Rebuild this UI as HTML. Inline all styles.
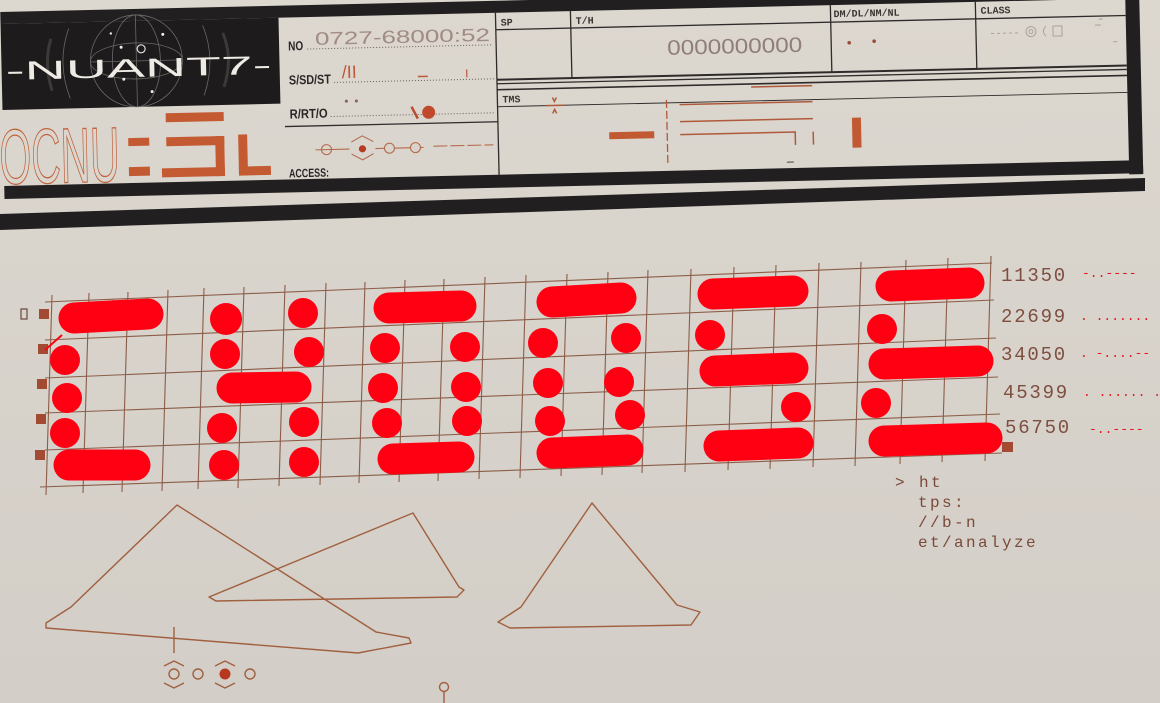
<!DOCTYPE html>
<html><head><meta charset="utf-8"><style>
html,body{margin:0;padding:0;background:#d6d1c9;}
svg{display:block}
.n{font-family:"Liberation Sans",sans-serif;font-weight:bold;fill:#2a2626}
.m{font-family:"Liberation Mono",monospace}
</style></head><body>
<svg width="1160" height="703" viewBox="0 0 1160 703" xmlns="http://www.w3.org/2000/svg">
<defs>
<linearGradient id="pg" x1="0" y1="0" x2="0" y2="1">
<stop offset="0" stop-color="#dcd7cf"/><stop offset="1" stop-color="#d3cec7"/>
</linearGradient>
</defs>
<rect width="1160" height="703" fill="url(#pg)"/>

<polygon points="0,214 1145,178 1145,191 0,230" fill="#211f1f"/>

<g transform="rotate(-1.3)">
  <rect x="0" y="12" width="1140" height="12" fill="#211f1f"/>
  <rect x="1125" y="-10" width="14" height="210" fill="#211f1f"/>
  <rect x="0" y="186" width="1139" height="13" fill="#211f1f"/>
  <rect x="0" y="24" width="278" height="86" fill="#1d1b1b"/>
  <g stroke="#8d8a88" fill="none" stroke-width="0.8" opacity="0.7">
    <circle cx="135" cy="64" r="46"/>
    <ellipse cx="135" cy="64" rx="24" ry="46"/>
    <ellipse cx="135" cy="64" rx="46" ry="18"/>
    <line x1="89" y1="64" x2="181" y2="64"/>
    <line x1="135" y1="18" x2="135" y2="110"/>
    <path d="M68 30 Q55 64 68 100"/><path d="M202 30 Q215 64 202 100"/>
    <path d="M50 40 Q42 64 50 92" stroke-width="3" stroke="#4a4747"/>
    <path d="M222 38 Q232 64 222 92" stroke-width="3" stroke="#4a4747"/>
  </g>
  <circle cx="140" cy="52" r="4" fill="none" stroke="#ddd" stroke-width="1.2"/>
  <g fill="#eee"><circle cx="120" cy="50" r="1.5"/><circle cx="162" cy="38" r="1.5"/><circle cx="122" cy="82" r="1.5"/><circle cx="150" cy="95" r="1.5"/><circle cx="110" cy="36" r="1.2"/></g>
  <text x="4" y="80" font-family="Liberation Sans,sans-serif" font-size="26" fill="#eeeae4" textLength="266" lengthAdjust="spacingAndGlyphs">-NUANT7-</text>

  <text x="-4" y="184" font-family="Liberation Sans,sans-serif" font-size="78" fill="none" stroke="#c0623c" stroke-width="1.3" textLength="120" lengthAdjust="spacingAndGlyphs">OCNU</text>
  <g fill="#c45a32">
    <rect x="125" y="141" width="21" height="8"/><rect x="125" y="170" width="21" height="9"/>
    <rect x="163" y="117" width="58" height="9"/><rect x="163" y="141" width="58" height="9"/>
    <rect x="212" y="141" width="9" height="40"/><rect x="158" y="172" width="63" height="9"/>
    <rect x="235" y="140" width="9" height="41"/><rect x="235" y="172" width="32" height="9"/>
  </g>

  <g stroke="#2e2b2a" stroke-width="1.3">
    <line x1="495" y1="24" x2="495" y2="186"/>
    <line x1="282" y1="133" x2="495" y2="133"/>
    <line x1="495" y1="41" x2="1125" y2="41"/>
    <line x1="570" y1="24" x2="570" y2="92"/>
    <line x1="830" y1="24" x2="830" y2="92"/>
    <line x1="975" y1="24" x2="975" y2="92"/>
    <line x1="495" y1="91" x2="1125" y2="91" stroke-width="2"/>
    <line x1="495" y1="95" x2="1125" y2="95"/>
    <line x1="495" y1="101" x2="1125" y2="101" stroke-width="1.6"/>
    <line x1="495" y1="118" x2="1125" y2="118" stroke-width="0.9"/>
  </g>
  <text class="n" x="287" y="57" font-size="13" textLength="15" lengthAdjust="spacingAndGlyphs">NO</text>
  <line x1="306" y1="56" x2="492" y2="56" stroke="#6a5e58" stroke-width="1" stroke-dasharray="1 2"/>
  <text x="314" y="52" font-family="Liberation Sans,sans-serif" font-size="18" fill="#a08c84" textLength="175" lengthAdjust="spacingAndGlyphs">0727-68000:52</text>
  <text class="n" x="287" y="91" font-size="13" textLength="42" lengthAdjust="spacingAndGlyphs">S/SD/ST</text>
  <line x1="332" y1="90" x2="492" y2="90" stroke="#6a5e58" stroke-width="1" stroke-dasharray="1 2"/>
  <text x="340" y="86" font-family="Liberation Sans,sans-serif" font-size="18" fill="#c0583a">/II</text>
  <line x1="416" y1="86" x2="426" y2="86" stroke="#c0583a" stroke-width="1.5"/>
  <line x1="465" y1="80" x2="465" y2="88" stroke="#c0583a" stroke-width="1.2"/>
  <text class="n" x="287" y="125" font-size="13" textLength="38" lengthAdjust="spacingAndGlyphs">R/RT/O</text>
  <line x1="328" y1="124" x2="492" y2="124" stroke="#6a5e58" stroke-width="1" stroke-dasharray="1 2"/>
  <circle cx="344" cy="109" r="1.5" fill="#8a6050"/><circle cx="354" cy="109" r="1.5" fill="#8a6050"/>
  <line x1="409" y1="116" x2="415" y2="128" stroke="#b84c2c" stroke-width="2.5"/>
  <circle cx="426" cy="122" r="6.5" fill="#c0492c"/>
  <g stroke="#b56a4c" fill="none" stroke-width="1.1">
    <line x1="312" y1="157" x2="346" y2="157"/>
    <circle cx="323" cy="157" r="5"/>
    <path d="M348 150 L359 144 L370 150 M348 162 L359 168 L370 162"/>
    <line x1="372" y1="157" x2="420" y2="157"/>
    <circle cx="386" cy="157" r="5" fill="#d8d3cb"/>
    <circle cx="412" cy="157" r="5" fill="#d8d3cb"/>
    <line x1="430" y1="156" x2="490" y2="156" stroke-dasharray="14 3"/>
  </g>
  <circle cx="359" cy="157" r="3.6" fill="#b93a22"/>
  <text class="n" x="285" y="184" font-size="12" textLength="40" lengthAdjust="spacingAndGlyphs">ACCESS:</text>

  <text class="m" x="500" y="37" font-size="10" fill="#3b3533" font-weight="bold">SP</text>
  <text class="m" x="575" y="37" font-size="10" fill="#3b3533" font-weight="bold">T/H</text>
  <text class="m" x="833" y="36" font-size="10" fill="#3b3533" font-weight="bold">DM/DL/NM/NL</text>
  <text class="m" x="980" y="36" font-size="10" fill="#3b3533" font-weight="bold">CLASS</text>
  <text x="666" y="70" font-family="Liberation Sans,sans-serif" font-size="21" fill="#8f7f78" textLength="135" lengthAdjust="spacingAndGlyphs">0000000000</text>
  <circle cx="848" cy="62" r="1.8" fill="#9a4a35"/><circle cx="873" cy="61" r="1.8" fill="#9a4a35"/>
  <g stroke="#aaa39c" fill="none" stroke-width="1">
    <line x1="990" y1="56" x2="1020" y2="56" stroke-dasharray="3 3"/>
    <circle cx="1030" cy="55" r="5"/><circle cx="1030" cy="55" r="2"/>
    <path d="M1045 50 Q1040 55 1045 60"/><rect x="1052" y="50" width="9" height="10"/>
    <line x1="1098" y1="44" x2="1102" y2="44"/><line x1="1094" y1="50" x2="1100" y2="50"/><line x1="1112" y1="67" x2="1116" y2="67"/>
  </g>
  <text class="m" x="500" y="114" font-size="10" fill="#3b3533" font-weight="bold">TMS</text>
  <g stroke="#b05a3c" stroke-width="1.5" fill="none">
    <line x1="543" y1="118" x2="562" y2="118"/>
    <path d="M550 110 L552 114 L554 110 M550 126 L552 122 L554 126"/>
    <line x1="664" y1="115" x2="664" y2="180" stroke-dasharray="8 3" stroke-width="1.3"/>
    <line x1="749" y1="104" x2="810" y2="104"/>
    <line x1="677" y1="120" x2="810" y2="120"/>
    <line x1="677" y1="137" x2="810" y2="137"/>
    <path d="M677 150 L792 150 L792 163"/>
    <line x1="810" y1="150" x2="810" y2="163"/>
    <line x1="783" y1="180" x2="790" y2="180" stroke="#777"/>
  </g>
  <rect x="606" y="146" width="45" height="7" fill="#c15a33"/>
  <rect x="849" y="137" width="9" height="30" fill="#c15a33"/>
</g>

<g stroke="#8c5d48" stroke-width="1.1">
  <line x1="45" y1="302" x2="992" y2="263"/>
  <line x1="45" y1="340" x2="994" y2="300"/>
  <line x1="45" y1="378" x2="996" y2="338"/>
  <line x1="45" y1="413" x2="998" y2="377"/>
  <line x1="45" y1="450" x2="1000" y2="414"/>
  <line x1="40" y1="487" x2="1002" y2="453"/>
  <line x1="52" y1="295" x2="46" y2="495"/>
  <line x1="89" y1="293" x2="83" y2="493"/>
  <line x1="128" y1="292" x2="122" y2="492"/>
  <line x1="168" y1="290" x2="162" y2="491"/>
  <line x1="204" y1="288" x2="198" y2="489"/>
  <line x1="244" y1="287" x2="238" y2="488"/>
  <line x1="285" y1="285" x2="279" y2="486"/>
  <line x1="326" y1="283" x2="320" y2="485"/>
  <line x1="365" y1="282" x2="359" y2="483"/>
  <line x1="405" y1="280" x2="399" y2="482"/>
  <line x1="444" y1="279" x2="438" y2="481"/>
  <line x1="485" y1="277" x2="479" y2="479"/>
  <line x1="526" y1="275" x2="520" y2="478"/>
  <line x1="567" y1="274" x2="561" y2="476"/>
  <line x1="608" y1="272" x2="602" y2="475"/>
  <line x1="648" y1="270" x2="642" y2="473"/>
  <line x1="691" y1="269" x2="685" y2="472"/>
  <line x1="734" y1="267" x2="728" y2="470"/>
  <line x1="776" y1="265" x2="770" y2="469"/>
  <line x1="819" y1="263" x2="813" y2="467"/>
  <line x1="861" y1="262" x2="855" y2="466"/>
  <line x1="906" y1="260" x2="900" y2="464"/>
  <line x1="948" y1="258" x2="942" y2="462"/>
  <line x1="991" y1="256" x2="985" y2="461"/>
</g>
<g fill="#a24a32">
  <rect x="39" y="309" width="10" height="10"/><rect x="38" y="344" width="10" height="10"/>
  <rect x="37" y="379" width="10" height="10"/><rect x="36" y="414" width="10" height="10"/>
  <rect x="35" y="450" width="10" height="10"/><rect x="1002" y="442" width="11" height="10"/>
</g>
<rect x="21" y="309" width="6" height="10" fill="none" stroke="#6a4a40" stroke-width="1.2"/>

<g stroke="#ff0012" stroke-width="31" stroke-linecap="round" fill="none">
  <line x1="74" y1="318" x2="148" y2="314"/>
  <line x1="69" y1="465" x2="135" y2="465"/>
  <line x1="232" y1="388" x2="296" y2="387"/>
  <line x1="389" y1="308" x2="461" y2="306"/>
  <line x1="393" y1="459" x2="459" y2="457"/>
  <line x1="552" y1="302" x2="621" y2="298"/>
  <line x1="552" y1="453" x2="628" y2="450"/>
  <line x1="713" y1="294" x2="793" y2="291"/>
  <line x1="715" y1="371" x2="793" y2="368"/>
  <line x1="719" y1="446" x2="798" y2="443"/>
  <line x1="891" y1="286" x2="969" y2="283"/>
  <line x1="884" y1="364" x2="978" y2="361"/>
  <line x1="884" y1="441" x2="987" y2="438"/>
</g>
<g fill="#ff0012">
  <circle cx="65" cy="360" r="15"/><circle cx="67" cy="398" r="15"/><circle cx="65" cy="433" r="15"/>
  <circle cx="226" cy="319" r="16"/><circle cx="303" cy="313" r="15"/><circle cx="225" cy="354" r="15"/><circle cx="309" cy="352" r="15"/>
  <circle cx="222" cy="428" r="15"/><circle cx="304" cy="422" r="15"/><circle cx="224" cy="465" r="15"/><circle cx="304" cy="462" r="15"/>
  <circle cx="385" cy="348" r="15"/><circle cx="465" cy="347" r="15"/><circle cx="383" cy="388" r="15"/><circle cx="466" cy="387" r="15"/>
  <circle cx="387" cy="423" r="15"/><circle cx="467" cy="421" r="15"/>
  <circle cx="543" cy="343" r="15"/><circle cx="626" cy="338" r="15"/><circle cx="548" cy="383" r="15"/><circle cx="619" cy="382" r="15"/>
  <circle cx="550" cy="421" r="15"/><circle cx="630" cy="415" r="15"/>
  <circle cx="710" cy="335" r="15"/><circle cx="796" cy="407" r="15"/>
  <circle cx="882" cy="329" r="15"/><circle cx="876" cy="403" r="15"/>
  <path d="M120 303 L112 300 L110 307 Z"/>
</g>
<line x1="45" y1="350" x2="62" y2="335" stroke="#ff0012" stroke-width="2"/>

<g class="m" font-size="19" fill="#7e4f40" letter-spacing="1.8">
  <text x="1001" y="281">11350</text>
  <text x="1001" y="322">22699</text>
  <text x="1001" y="360">34050</text>
  <text x="1003" y="398">45399</text>
  <text x="1005" y="433">56750</text>
</g>
<g class="m" font-size="13" fill="#e8141a">
  <text x="1082" y="277">-..----</text>
  <text x="1080" y="320">. ....... .</text>
  <text x="1080" y="357">. -....--</text>
  <text x="1083" y="396">. ...... ..</text>
  <text x="1089" y="433">-..----</text>
</g>
<g class="m" font-size="16" fill="#7a4a3a" letter-spacing="2.4">
  <text x="895" y="487">&gt; ht</text>
  <text x="918" y="507">tps:</text>
  <text x="918" y="527">//b-n</text>
  <text x="918" y="547">et/analyze</text>
</g>

<g stroke="#a0603f" stroke-width="1.4" fill="none" stroke-linejoin="round">
  <polygon points="177,505 71,607 46,623 46,628 358,653 411,643 409,638 376,632"/>
  <polygon points="413,513 459,587 464,590 457,597 216,601 209,597"/>
  <polygon points="592,503 677,605 700,612 691,625 510,628 498,622 521,607"/>
  <line x1="174" y1="627" x2="174" y2="653"/>
  <circle cx="174" cy="674" r="5"/>
  <path d="M164 666 L174 661 L184 666 M164 683 L174 688 L184 683"/>
  <circle cx="198" cy="674" r="5"/>
  <path d="M215 666 L225 661 L235 666 M215 683 L225 688 L235 683"/>
  <circle cx="250" cy="674" r="5"/>
  <circle cx="444" cy="687" r="4.5"/>
  <line x1="444" y1="692" x2="444" y2="703"/>
</g>
<circle cx="225" cy="674" r="5.5" fill="#b8381f"/>
</svg>
</body></html>
